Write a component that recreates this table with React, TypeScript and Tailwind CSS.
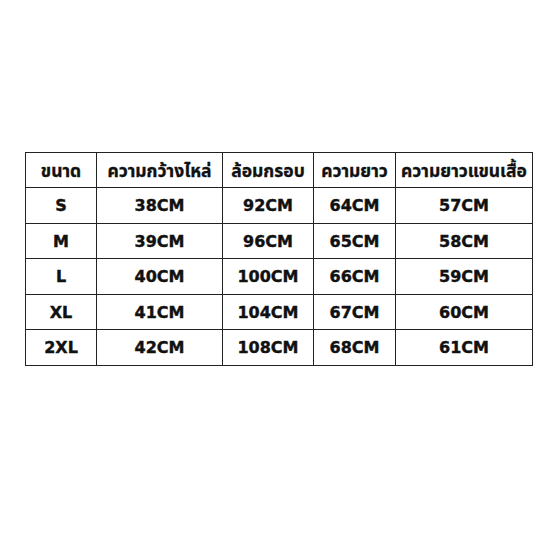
const header = ["ขนาด", "ความกว้างไหล่", "ล้อมกรอบ", "ความยาว", "ความยาวแขนเสื้อ"];

const rows = [
  ["S", "38CM", "92CM", "64CM", "57CM"],
  ["M", "39CM", "96CM", "65CM", "58CM"],
  ["L", "40CM", "100CM", "66CM", "59CM"],
  ["XL", "41CM", "104CM", "67CM", "60CM"],
  ["2XL", "42CM", "108CM", "68CM", "61CM"],
];

const widths = ["w-[71px]", "w-[126px]", "w-[91px]", "w-[82px]", "w-[137px]"];

export default function App() {
  return (
    <div className="w-[556px] h-[556px] bg-white pt-[152px] font-['DejaVu_Sans','Noto_Sans_Thai','Noto_Sans',sans-serif] text-[#111]">
      <table className="ml-[25px] border-collapse table-fixed w-[508px]">
        <thead>
          <tr className="h-[35px]">
            {header.map((h, i) => (
              <th
                key={h}
                className={`${widths[i]} border border-[#222] p-0 pt-[2px] text-center text-[17.5px] font-bold whitespace-nowrap [-webkit-text-stroke:0.3px_#111]`}
              >
                {h}
              </th>
            ))}
          </tr>
        </thead>
        <tbody>
          {rows.map((r) => (
            <tr key={r[0]} className="h-[35.5px]">
              {r.map((c, i) => (
                <td
                  key={i}
                  className="border border-[#222] p-0 pt-[2px] text-center text-[16px] font-bold [-webkit-text-stroke:0.4px_#111]"
                >
                  {c}
                </td>
              ))}
            </tr>
          ))}
        </tbody>
      </table>
    </div>
  );
}
